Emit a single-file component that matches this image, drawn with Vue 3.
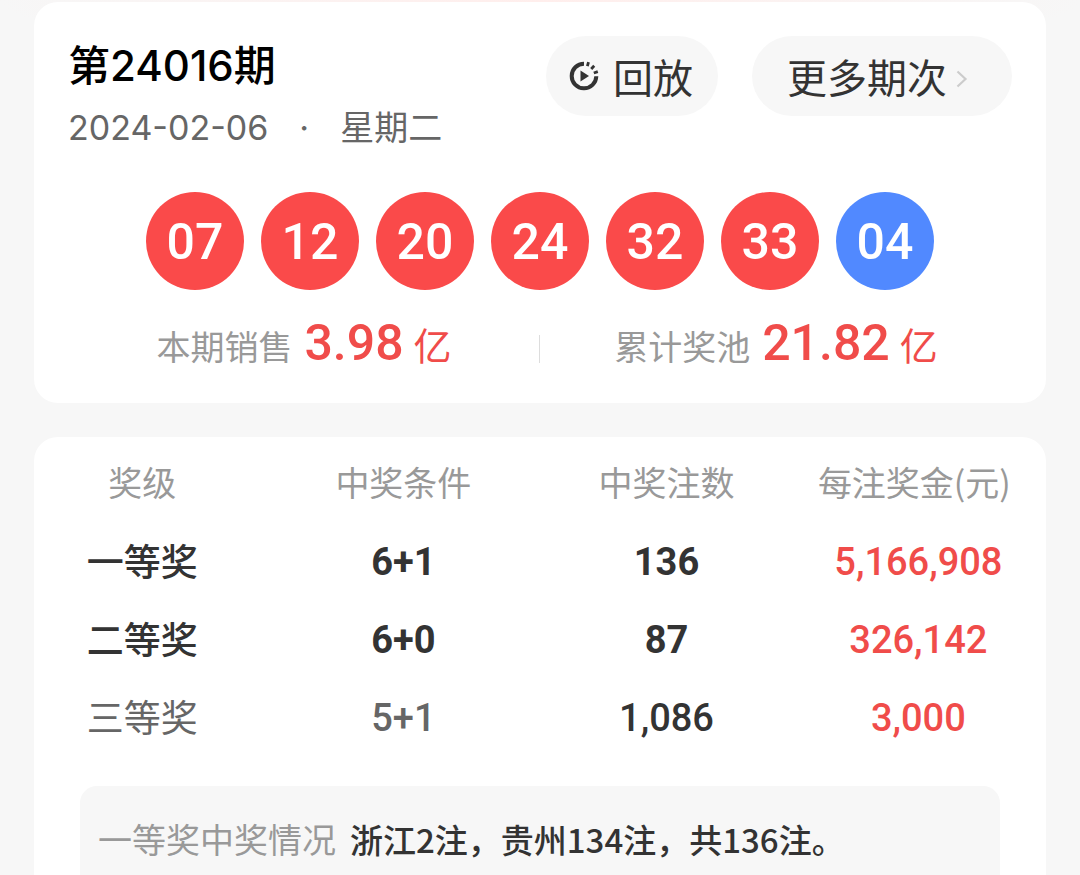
<script setup>
const balls = [
  { n: '07', kind: 'red' },
  { n: '12', kind: 'red' },
  { n: '20', kind: 'red' },
  { n: '24', kind: 'red' },
  { n: '32', kind: 'red' },
  { n: '33', kind: 'red' },
  { n: '04', kind: 'blue' },
]
const sums = [
  { label: '本期销售', value: '3.98' },
  { label: '累计奖池', value: '21.82' },
]
const prizes = [
  { level: '一等奖', rule: '6+1', count: '136', amount: '5,166,908', top: true },
  { level: '二等奖', rule: '6+0', count: '87', amount: '326,142', top: true },
  { level: '三等奖', rule: '5+1', count: '1,086', amount: '3,000', top: false },
]
</script>

<template>
  <main class="page">
    <section class="card draw">
      <header class="head">
        <div class="issue">
          <h1>第24016期</h1>
          <p class="date"><time datetime="2024-02-06">2024-02-06</time><span>·</span><span>星期二</span></p>
        </div>
        <div class="actions">
          <button type="button" class="pill replay">
            <svg class="play" viewBox="0 0 30 30" aria-hidden="true">
              <path d="M15 2.7 A12.3 12.3 0 1 0 27.3 15.3" fill="none" stroke="#333" stroke-width="4" />
              <path d="M11.5 9.5 L20 15 L11.5 20.5 Z" fill="#333" />
              <path d="M18.4 5.2 L19.5 1.2 M22.2 8 L25.2 4.8 M24.8 12 L28.8 10.6" fill="none" stroke="#333" stroke-width="2.8" />
            </svg>
            <span>回放</span>
          </button>
          <button type="button" class="pill more">
            <span>更多期次</span>
            <svg class="chevron" viewBox="0 0 12 18" aria-hidden="true">
              <path d="M1.5 1.5 L9.5 9 L1.5 16.5" fill="none" stroke="#ccc" stroke-width="2.2" />
            </svg>
          </button>
        </div>
      </header>

      <ul class="balls">
        <li v-for="b in balls" :key="b.n" class="ball" :class="b.kind">{{ b.n }}</li>
      </ul>

      <div class="sums">
        <div v-for="s in sums" :key="s.label" class="sum">
          <span class="sum-label">{{ s.label }}</span>
          <span class="sum-value">{{ s.value }}</span>
          <span class="sum-unit">亿</span>
        </div>
      </div>
    </section>

    <section class="card detail">
      <table>
        <thead>
          <tr>
            <th scope="col">奖级</th>
            <th scope="col">中奖条件</th>
            <th scope="col">中奖注数</th>
            <th scope="col">每注奖金(元)</th>
          </tr>
        </thead>
        <tbody>
          <tr v-for="p in prizes" :key="p.level" :class="{ top: p.top }">
            <td class="level">{{ p.level }}</td>
            <td class="rule">{{ p.rule }}</td>
            <td class="count">{{ p.count }}</td>
            <td class="amount">{{ p.amount }}</td>
          </tr>
        </tbody>
      </table>
      <p class="note"><span>一等奖中奖情况</span><strong>浙江2注，贵州134注，共136注。</strong></p>
    </section>
  </main>
</template>

<style>
html,
body {
  margin: 0;
  background: #f7f7f7;
}
</style>

<style scoped>
.page {
  box-sizing: border-box;
  height: 100vh;
  overflow: hidden;
  padding: 2px 34px 0;
  color: #333;
  font-family: "Noto Sans CJK SC", sans-serif;
  background: radial-gradient(ellipse 50% 60px at 50% 0, #ffeeec, #f7f7f7) #f7f7f7;
}
.card {
  background: #fff;
  border-radius: 24px;
}
.draw {
  padding: 34px 34px 22px;
}
.head {
  display: flex;
  justify-content: space-between;
}
h1 {
  margin: 0;
  font: 500 42px/60px Inter, "Noto Sans CJK SC", sans-serif;
  color: #000;
}
.date {
  display: flex;
  gap: 31px;
  margin: 8px 0 0;
  font: 400 34px/48px Inter, "Noto Sans CJK SC", sans-serif;
  color: #666;
}
.actions {
  display: flex;
  gap: 34px;
}
.pill {
  display: flex;
  align-items: center;
  height: 80px;
  border: 0;
  border-radius: 40px;
  background: #f7f7f7;
  color: #333;
  font: 400 40px/60px "Noto Sans CJK SC", sans-serif;
  white-space: nowrap;
}
.replay {
  gap: 14px;
  padding: 0 25px 0 23px;
}
.more {
  gap: 9px;
  padding: 0 44px 0 35px;
}
.play {
  width: 30px;
  height: 30px;
}
.chevron {
  width: 12px;
  height: 18px;
  margin-top: 6px;
}
.balls {
  display: flex;
  justify-content: center;
  gap: 17px;
  margin: 40px 0 0;
  padding: 0;
  list-style: none;
}
.ball {
  width: 98px;
  height: 98px;
  border-radius: 50%;
  color: #fff;
  font: 500 50px/100px Roboto, sans-serif;
  text-align: center;
}
.red {
  background: #fa4a4a;
}
.blue {
  background: #5189ff;
}
.sums {
  display: grid;
  grid-template-columns: 1fr 1fr;
  margin-top: 18px;
}
.sum {
  position: relative;
  display: flex;
  align-items: baseline;
  justify-content: center;
  line-height: 70px;
}
.sum + .sum::before {
  content: "";
  position: absolute;
  left: -1px;
  top: 27px;
  width: 1px;
  height: 28px;
  background: #ddd;
}
.sum-label {
  margin-right: 12px;
  font-size: 34px;
  color: #999;
}
.sum-value {
  margin-right: 10px;
  font-family: Roboto, sans-serif;
  font-weight: 500;
  font-size: 50px;
  color: #f04c4a;
}
.sum-unit {
  font-size: 38px;
  color: #f04c4a;
}
.detail {
  margin-top: 34px;
  padding: 4px 0 34px;
}
table {
  width: 100%;
  table-layout: fixed;
  border-collapse: collapse;
}
th,
td {
  box-sizing: border-box;
  height: 78px;
  padding: 0;
  text-align: center;
  white-space: nowrap;
}
th {
  height: 82px;
  font-weight: 400;
  font-size: 34px;
  line-height: 50px;
  color: #999;
}
th:nth-child(1),
th:nth-child(3) {
  width: 21%;
}
th:nth-child(2) {
  width: 31%;
}
th:first-child,
td:first-child {
  padding-left: 4px;
}
th:last-child {
  padding-left: 10px;
}
td:last-child {
  padding-left: 18px;
}
td {
  font: 500 38px/54px Roboto, "Noto Sans CJK SC", sans-serif;
}
.level {
  padding-top: 4px;
  font-size: 37px;
  font-weight: 400;
  color: #666;
}
.rule {
  color: #666;
}
.top .level {
  font-weight: 500;
  color: #333;
}
.top .rule,
.top .count {
  font-weight: 700;
  color: #333;
}
.amount {
  color: #f04c4a;
}
.note {
  display: flex;
  gap: 14px;
  margin: 29px 46px 0;
  padding: 28px 18px;
  border-radius: 17px;
  background: #f7f7f7;
  font-size: 34px;
  line-height: 50px;
  white-space: nowrap;
}
.note span {
  color: #999;
}
.note strong {
  font-size: 33px;
  font-weight: 500;
}
</style>
